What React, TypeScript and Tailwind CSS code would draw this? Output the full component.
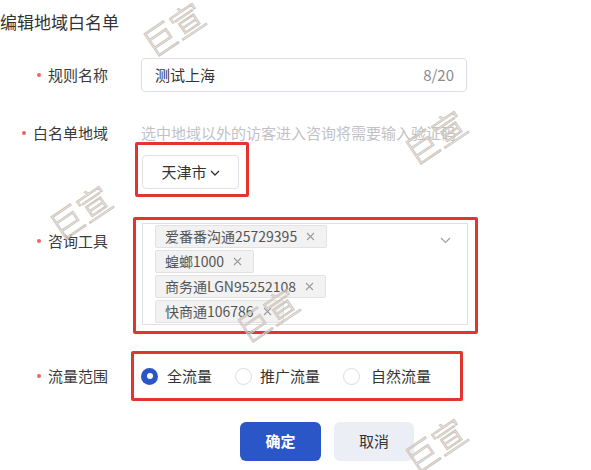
import React from "react";

const FONT = "font-['Noto_Sans_CJK_SC','Noto_Sans',sans-serif]";

function Label({ text }: { text: string }) {
  return (
    <div className="w-[108px] shrink-0 flex items-center justify-end text-[15px] leading-[20px] text-[#3a3a3a]">
      <span className="w-[4px] h-[4px] rounded-full bg-[#f0645f] mr-[7px]" />
      <span>{text}</span>
    </div>
  );
}

function Tag({ text }: { text: string }) {
  return (
    <div className="h-[23px] self-start flex items-center bg-[#f2f2f3] border border-[#e2e2e4] rounded-[2px] pl-[9px] pr-[11px] text-[14px] text-[#555]">
      <span>{text}</span>
      <svg width="9" height="9" viewBox="0 0 9 9" className="ml-[9px]">
        <path d="M1 1L8 8M8 1L1 8" stroke="#9a9a9a" strokeWidth="1.1" />
      </svg>
    </div>
  );
}

function Radio({ checked, text, gap }: { checked?: boolean; text: string; gap: string }) {
  return (
    <div className="flex items-center">
      {checked ? (
        <span className="w-[17px] h-[17px] rounded-full bg-[#2b56c7] flex items-center justify-center">
          <span className="w-[6px] h-[6px] rounded-full bg-white" />
        </span>
      ) : (
        <span className="w-[17px] h-[17px] rounded-full border border-[#d9dce5] bg-white" />
      )}
      <span className={`${gap} text-[15px] text-[#333]`}>{text}</span>
    </div>
  );
}

function Watermark({ x, y }: { x: number; y: number }) {
  return (
    <div
      className="absolute pointer-events-none -translate-x-1/2 -translate-y-1/2 rotate-[-34deg] text-[33px] leading-[33px] font-light text-transparent [-webkit-text-stroke:1px_#cdc5bd] whitespace-nowrap"
      style={{ left: x, top: y }}
    >
      巨宣
    </div>
  );
}

export default function App() {
  return (
    <div className={`relative w-[591px] h-[470px] overflow-hidden bg-white text-[#333] ${FONT}`}>
      <div className="pt-[11px] text-[17px] leading-[22px] text-[#333]">编辑地域白名单</div>

      {/* Row 1 */}
      <div className="mt-[25px] flex items-center h-[34px]">
        <Label text="规则名称" />
        <div className="ml-[33px] w-[326px] h-[34px] border border-[#dcdee6] rounded-[4px] flex items-center justify-between pl-[13px] pr-[12px]">
          <span className="text-[15px] text-[#333]">测试上海</span>
          <span className="text-[15px] text-[#8a8a8f]">8/20</span>
        </div>
      </div>

      {/* Row 2 */}
      <div className="mt-[31px] flex items-start">
        <div className="h-[20px] flex items-center">
          <Label text="白名单地域" />
        </div>
        <div className="ml-[33px] flex flex-col">
          <div className="text-[15px] leading-[20px] text-[#c2c2c6] whitespace-nowrap">选中地域以外的访客进入咨询将需要输入验证码</div>
          <div className="mt-[-1px] ml-[-6px] w-[114px] border-[3px] border-[#e2352d] rounded-[2px] pt-[10px] pb-[5px] pl-[4px]">
            <div className="w-[97px] h-[34px] border border-[#dfe1e8] rounded-[4px] flex items-center justify-center text-[15px] text-[#333]">
              <span>天津市</span>
              <svg width="10" height="6" viewBox="0 0 10 6" className="ml-[3px] mt-[2px]">
                <path d="M1 1L5 5L9 1" stroke="#333" strokeWidth="1.3" fill="none" />
              </svg>
            </div>
          </div>
        </div>
      </div>

      {/* Row 3 */}
      <div className="mt-[20px] flex items-start">
        <div className="mt-[14px] h-[20px] flex items-center">
          <Label text="咨询工具" />
        </div>
        <div className="ml-[25px] w-[345px] border-[3px] border-[#e2352d] rounded-[2px] pt-[3px] pl-[6px] pr-[7px] pb-[6px]">
          <div className="relative w-[326px] h-[102px] border border-[#dde0e8] flex flex-col gap-[2px] pl-[12px] pt-[1px]">
            <Tag text="爱番番沟通25729395" />
            <Tag text="蝗螂1000" />
            <Tag text="商务通LGN95252108" />
            <Tag text="快商通106786" />
            <svg width="11" height="7" viewBox="0 0 11 7" className="absolute right-[16px] top-[13px]">
              <path d="M1 1L5.5 5.5L10 1" stroke="#a0a0a6" strokeWidth="1.2" fill="none" />
            </svg>
          </div>
        </div>
      </div>

      {/* Row 4 */}
      <div className="mt-[17px] flex items-center">
        <Label text="流量范围" />
        <div className="ml-[23px] w-[332px] h-[50px] border-[3px] border-[#e2352d] rounded-[2px] flex items-center pl-[7px]">
          <Radio checked text="全流量" gap="ml-[9px]" />
          <div className="ml-[23px]">
            <Radio text="推广流量" gap="ml-[8px]" />
          </div>
          <div className="ml-[23px]">
            <Radio text="自然流量" gap="ml-[11px]" />
          </div>
        </div>
      </div>

      {/* Buttons */}
      <div className="mt-[21px] flex pl-[240px] gap-[13px]">
        <button className="w-[81px] h-[39px] rounded-[6px] bg-[#2b56c7] text-white text-[15px] font-semibold">确定</button>
        <button className="w-[80px] h-[39px] rounded-[6px] bg-[#eceef6] text-[#333] text-[15px]">取消</button>
      </div>

      <Watermark x={173} y={29} />
      <Watermark x={435} y={137} />
      <Watermark x={80} y={212} />
      <Watermark x={267} y={315} />
      <Watermark x={435} y={445} />
    </div>
  );
}
